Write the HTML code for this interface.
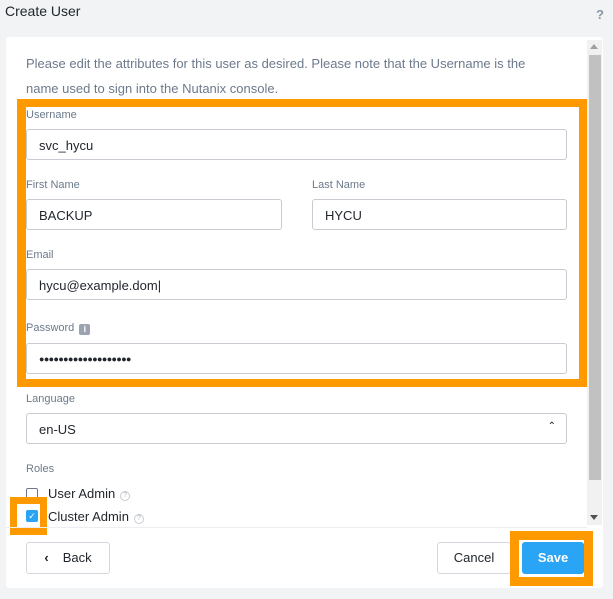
<!DOCTYPE html>
<html><head><style>
*{box-sizing:border-box;margin:0;padding:0}
body{width:613px;height:599px;background:#f2f3f5;font-family:"Liberation Sans",sans-serif;position:relative;overflow:hidden;color:#22272e}
.abs{position:absolute}
.title{left:5px;top:3px;font-size:14px;color:#22272e}
.q{left:596px;top:7px;font-size:13px;font-weight:bold;color:#8a96a6}
.panel{left:6px;top:37px;width:597px;height:551px;background:#fff;border-radius:3px}
.sb{left:587px;top:40px;width:15px;height:485px;background:#f1f1f1}
.thumb{left:589px;top:55px;width:12px;height:425px;background:#c1c1c1}
.desc{left:26px;top:51px;width:535px;font-size:13px;line-height:25px;color:#6c7a8b}
.ob{border:8px solid #ff9900;border-left-width:9px}
.lbl{font-size:11px;color:#6c7a8b}
.inp{border:1px solid #c8ccd2;border-radius:3px;height:31px;font-size:13px;padding:8px 12px;color:#22272e;background:#fff}
.cb{width:12px;height:12px;border:1px solid #6c7a8b;border-radius:2px;background:#fff}
.btn{border:1px solid #d4d8de;border-radius:3px;height:32px;font-size:13px;line-height:30px;text-align:center;background:#fff}
.help{display:inline-block;width:10px;height:10px;border:1px solid #c8ccd2;border-radius:50%;font-size:7px;line-height:8px;text-align:center;color:#b0b6be;vertical-align:1px;margin-left:5px}
</style></head><body>
<div class="abs title">Create User</div>
<div class="abs q">?</div>
<div class="abs panel"></div>
<div class="abs sb"></div>
<div class="abs thumb"></div>
<div class="abs" style="left:590px;top:44px;width:0;height:0;border-left:4px solid transparent;border-right:4px solid transparent;border-bottom:5px solid #a0a0a0"></div>
<div class="abs" style="left:590px;top:515px;width:0;height:0;border-left:4px solid transparent;border-right:4px solid transparent;border-top:5px solid #505050"></div>
<div class="abs desc">Please edit the attributes for this user as desired. Please note that the Username is the name used to sign into the Nutanix console.</div>
<div class="abs ob" style="left:17px;top:99px;width:570px;height:288px"></div>
<div class="abs lbl" style="left:26px;top:109px">Username</div>
<div class="abs inp" style="left:26px;top:129px;width:541px">svc_hycu</div>
<div class="abs lbl" style="left:26px;top:179px">First Name</div>
<div class="abs inp" style="left:26px;top:199px;width:256px">BACKUP</div>
<div class="abs lbl" style="left:312px;top:179px">Last Name</div>
<div class="abs inp" style="left:312px;top:199px;width:255px">HYCU</div>
<div class="abs lbl" style="left:26px;top:249px">Email</div>
<div class="abs inp" style="left:26px;top:269px;width:541px">hycu@example.dom|</div>
<div class="abs lbl" style="left:26px;top:322px">Password <span style="display:inline-block;width:11px;height:11px;background:#9aa3ae;border-radius:2px;color:#fff;font-size:9px;line-height:11px;text-align:center;font-weight:bold;vertical-align:-1px;margin-left:2px">i</span></div>
<div class="abs inp" style="left:26px;top:343px;width:541px;font-size:9px;letter-spacing:-0.6px;padding-top:10px">●●●●●●●●●●●●●●●●●●●</div>
<div class="abs lbl" style="left:26px;top:393px">Language</div>
<div class="abs inp" style="left:26px;top:413px;width:541px">en-US<span style="position:absolute;right:10px;top:7px;font-size:10px">&#8963;</span></div>
<div class="abs lbl" style="left:26px;top:463px">Roles</div>
<div class="abs cb" style="left:26px;top:488px"></div>
<div class="abs" style="left:48px;top:486px;font-size:13px">User Admin<span class="help">?</span></div>
<div class="abs ob" style="left:10px;top:497px;width:37px;height:38px;border-width:7px"></div>
<div class="abs" style="left:26px;top:510px;width:12px;height:12px;background:#2aa4f4;border-radius:2px;color:#fff;font-size:9px;line-height:12px;text-align:center">✓</div>
<div class="abs" style="left:48px;top:509px;font-size:13px">Cluster Admin<span class="help">?</span></div>
<div class="abs" style="left:6px;top:527px;width:581px;height:1px;background:#eceef1"></div>
<div class="abs btn" style="left:26px;top:542px;width:84px"><span style="font-weight:bold;margin-right:14px">&lsaquo;</span>Back</div>
<div class="abs btn" style="left:437px;top:542px;width:74px">Cancel</div>
<div class="abs ob" style="left:510px;top:531px;width:83px;height:55px;border-width:9px"></div>
<div class="abs" style="left:522px;top:542px;width:62px;height:32px;background:#2aa4f4;border-radius:3px;color:#fff;font-size:13px;font-weight:bold;line-height:32px;text-align:center">Save</div>
</body></html>
